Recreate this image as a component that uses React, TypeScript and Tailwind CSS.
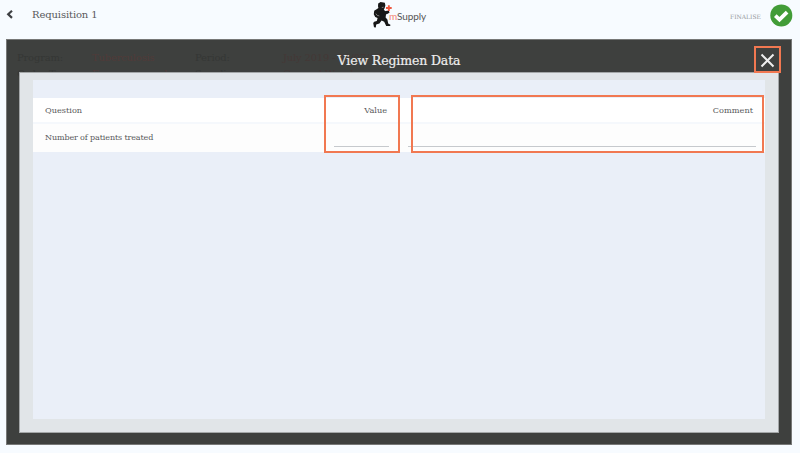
import React from "react";

const details = [
  { label: "Program:", value: "Tuberculosis", label2: "Period:", value2: "July 2019 - 01/07/19 - 31/07/19" },
  { label: "Order Type:", value: "Emergency orders", label2: "Supplier:", value2: "General Warehouse" },
];

function Logo() {
  return (
    <svg className="h-[27px] w-[20px] shrink-0" viewBox="0 0 20 27">
      <g fill="#171717">
        <path d="M5.2 2.6 7.6 1 11.8 1.8 12.4 4.4 11.6 7.2 10.8 8.8 12.4 10.2 14.4 9.8 15.4 11.4 13 13.4 12.6 16.4 14.4 18.6 15.2 22.6 17.4 23.8 17.2 25 13.2 25 11.2 20.8 8.6 19.4 6.4 22.4 3.2 23.6 2.8 26.4 1 26.2 0.2 22 1.2 20.8 3.8 20 4.6 17 2.2 16 0.8 13.2 1.2 9.8 4 8 5.4 7 5 5.2Z" />
        <path d="M12.1 10 15.9 9.8 16.5 11.8 13.6 13.2Z" />
      </g>
      <path d="m2.8 12.6 1.4 1.8 2.1.5M8.8 6.6l1.8-.4" stroke="#b5b5b5" strokeWidth=".6" fill="none" />
      <path d="M13 6.1h1.9V4.2h1.9v1.9h1.9V8h-1.9v1.9h-1.9V8H13Z" fill="#ed5a42" />
    </svg>
  );
}

function Header() {
  return (
    <header className="flex h-[39px] shrink-0 items-start">
      <div className="flex w-[373px] items-center pl-[6px] pt-[6px]">
        <svg className="h-[17px] w-[8px]" viewBox="0 0 8 17">
          <path d="M6 4.7 2.2 8.3 6 11.9" fill="none" stroke="#3e4043" strokeWidth="2.2" />
        </svg>
        <span className="ml-[18px] text-[10px] leading-[17px] tracking-[-0.12px]">Requisition 1</span>
      </div>
      <div className="flex w-[297px] pt-[1px]">
        <Logo />
        <span className="-ml-[4px] pt-[8px] font-['Lato',sans-serif] text-[10px] leading-[15px] tracking-[-0.1px] text-[#555]">
          <span className="text-[#f5846f]">m</span>Supply
        </span>
      </div>
      <div className="flex flex-1 items-start pl-[60px] pt-[4px]">
        <span className="w-[40px] whitespace-nowrap pt-[8px] text-[6px] leading-[10px] text-[#96999c]">FINALISE</span>
        <svg className="h-[23px] w-[23px]" viewBox="0 0 23 23">
          <circle cx="11.3" cy="11.4" r="11" fill="#429c37" />
          <path d="m5.3 11.6 4.2 4 7.6-7.4" fill="none" stroke="#fff" strokeWidth="3.8" />
        </svg>
      </div>
    </header>
  );
}

function RegimenTable() {
  return (
    <section className="relative h-[339px] bg-[#eaeff8] pt-[18px]">
      <div className="flex h-[26px] items-center border-b-2 border-[#f5f8fc] bg-white pt-[1px] text-[8.2px] leading-[11px]">
        <span className="w-[302px] pl-[12px]">Question</span>
        <span className="w-[52px] text-right">Value</span>
        <span className="flex-1 pr-[12px] text-right">Comment</span>
      </div>
      <div className="flex h-[28px] bg-[#fdfdfd] text-[8px]">
        <span className="w-[301px] pl-[12px] pt-[9px] leading-[10px] tracking-[-0.12px]">Number of patients treated</span>
        <div className="h-[23px] w-[55px] border-b border-[#c6c9cd]" />
        <div className="ml-[19px] h-[23px] w-[348px] border-b border-[#c6c9cd]" />
      </div>
      <div className="absolute left-[291px] top-[15px] h-[58px] w-[76px] border-2 border-[#f17851]" />
      <div className="absolute left-[378px] top-[15px] h-[58px] w-[353px] border-2 border-[#f17851]" />
    </section>
  );
}

export default function App() {
  return (
    <div className="flex h-[453px] w-[800px] flex-col overflow-hidden bg-[#f7fbff] font-['DejaVu_Serif',serif] text-[#58595b]">
      <Header />
      <main className="relative ml-[6px] h-[406px] w-[786px] overflow-hidden border border-[#777877] bg-[#3e403e]">
        <div className="pl-[10px] pt-[10px] text-[10px] leading-[16px] tracking-[-0.2px] text-[#353735]">
          {details.map((row) => (
            <div key={row.label} className="flex whitespace-nowrap">
              <span className="w-[75px]">{row.label}</span>
              <span className="w-[103px] text-[#503b39]">{row.value}</span>
              <span className="w-[88px]">{row.label2}</span>
              <span className="text-[#443836]">{row.value2}</span>
            </div>
          ))}
        </div>
        <div className="absolute inset-0 flex flex-col px-[12px]">
          <div className="relative flex h-[32px] shrink-0 items-center justify-center pt-[9px]">
            <h1 className="text-[12.5px] leading-[16px] tracking-[-0.12px] text-[#eeeeee] [-webkit-text-stroke:0.2px_#eeeeee]">View Regimen Data</h1>
            <button className="absolute right-[-2px] top-[6px] flex h-[27px] w-[27px] items-center justify-center border-2 border-[#f17851]" aria-label="Close">
              <svg className="mt-px h-[15px] w-[15px]" viewBox="0 0 15 15">
                <path d="m1.5 1.5 12 12m0-12-12 12" stroke="#eeeeee" strokeWidth="2" />
              </svg>
            </button>
          </div>
          <div className="h-[361px] shrink-0 border border-[#a4a7a8] bg-[#e1e5e8] px-[13px] pt-[7px]">
            <RegimenTable />
          </div>
        </div>
      </main>
    </div>
  );
}
